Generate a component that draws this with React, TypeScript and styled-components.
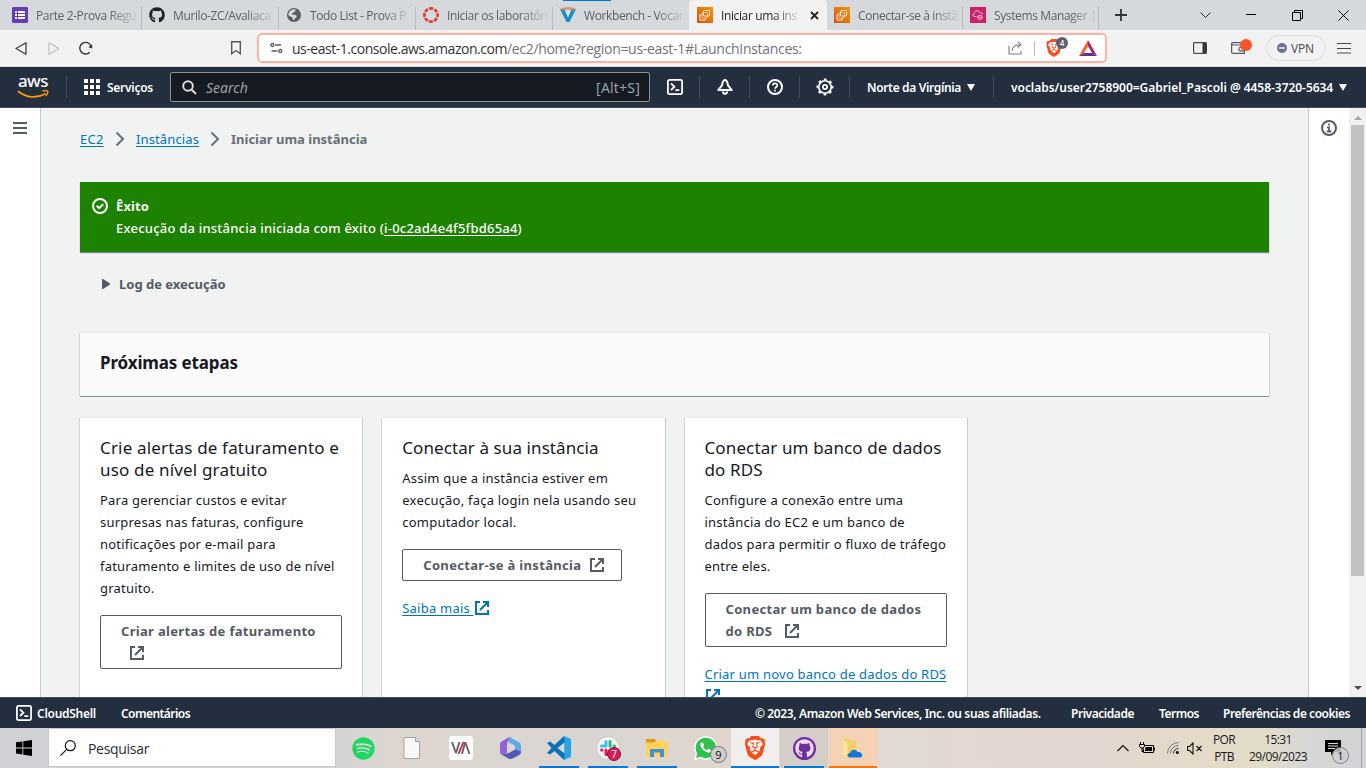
import React from 'react';
import styled, { createGlobalStyle, css } from 'styled-components';
import { FaGithub, FaSpotify } from 'react-icons/fa';
import { SiBrave } from 'react-icons/si';

const GlobalStyle = createGlobalStyle`
  * { box-sizing: border-box; }
  html, body { margin: 0; padding: 0; overflow: hidden; }
  svg { display: block; flex: none; }
`;

const ember = '"Noto Sans", "Open Sans", sans-serif';
const segoe = '"Open Sans", "Noto Sans", sans-serif';

const Screen = styled.div`
  width: 1366px;
  height: 768px;
  display: flex;
  flex-direction: column;
  overflow: hidden;
  background: #f1f3f3;
  font-family: ${ember};
  font-size: 13px;
  color: #16191f;
`;

/* ---------- tab strip ---------- */
const TabStrip = styled.div`
  height: 30px;
  flex: none;
  display: flex;
  padding-left: 5px;
  background: #d5d9dc;
`;

const Tab = styled.div<{ $width: number; $active?: boolean; $divided?: boolean; $lead?: number }>`
  position: relative;
  width: ${(p) => p.$width}px;
  flex: none;
  display: flex;
  align-items: center;
  gap: 8px;
  padding-left: ${(p) => p.$lead ?? 7}px;
  font-family: ${segoe};
  font-size: 12px;
  letter-spacing: -0.38px;
  color: #5c6167;
  ${(p) =>
    p.$active &&
    css`
      background: #f2f2f2;
      color: #1f2329;
      border-radius: 4px 4px 0 0;
    `}
  &::after {
    content: '';
    display: ${(p) => (p.$divided ? 'block' : 'none')};
    position: absolute;
    right: 0;
    top: 7px;
    bottom: 0;
    width: 1px;
    background: #b9bdc0;
  }
`;

const LoadingLine = styled.div`
  position: absolute;
  left: 10px;
  top: 0;
  width: 48px;
  height: 1px;
  background: #0078d4;
`;

const TabTitle = styled.span<{ $width: number }>`
  width: ${(p) => p.$width}px;
  white-space: nowrap;
  -webkit-mask-image: linear-gradient(90deg, #000 calc(100% - 30px), transparent);
`;

const WindowControls = styled.div`
  display: flex;
  align-items: center;
  margin-left: 16px;
  color: #111;
`;

const Control = styled.div<{ $left?: number }>`
  width: 12px;
  margin-left: ${(p) => p.$left ?? 0}px;
  display: flex;
  justify-content: center;
`;

/* ---------- address bar ---------- */
const Toolbar = styled.div`
  height: 37px;
  flex: none;
  display: flex;
  align-items: center;
  padding-left: 15px;
  background: #f2f2f2;
  border-bottom: 1px solid #d9dcdd;
  font-family: ${segoe};
`;

const ToolIcon = styled.div<{ $left?: number }>`
  position: relative;
  margin-left: ${(p) => p.$left ?? 0}px;
`;

const AddressBox = styled.div`
  width: 850px;
  height: 30px;
  flex: none;
  margin-left: 16px;
  padding: 0 8px 0 11px;
  display: flex;
  align-items: center;
  background: #fff;
  border: 2px solid #ffb1a2;
  border-radius: 5px;
`;

const Host = styled.span`
  margin-left: 9px;
  font-size: 14px;
  letter-spacing: -0.47px;
  color: #2f3338;
`;

const Path = styled.span`
  flex: 1;
  font-size: 14px;
  letter-spacing: -0.31px;
  color: #6f747b;
`;

const Divider = styled.div`
  width: 1px;
  height: 15px;
  margin: 0 10px 0 12px;
  background: #b9bcc0;
`;

const ShieldCount = styled.div`
  position: absolute;
  left: 11px;
  top: -2px;
  width: 12px;
  height: 12px;
  border-radius: 50%;
  background: #5b6070;
  color: #fff;
  font-size: 8px;
  font-weight: 600;
  line-height: 12px;
  text-align: center;
`;

const WalletDot = styled.div`
  position: absolute;
  left: 9px;
  top: -3px;
  width: 12px;
  height: 12px;
  border-radius: 50%;
  background: #fb542b;
`;

const VpnPill = styled.div`
  width: 60px;
  height: 26px;
  margin: 0 11px 0 21px;
  padding-left: 10px;
  display: flex;
  align-items: center;
  gap: 4px;
  border: 1px solid #dcdde0;
  border-radius: 13px;
  font-size: 12px;
  letter-spacing: -0.14px;
  color: #45494f;
`;

/* ---------- AWS navigation ---------- */
const NavBar = styled.div`
  height: 41px;
  flex: none;
  display: flex;
  align-items: center;
  background: #232f3e;
  border-bottom: 1px solid #414d5c;
  color: #fff;
  font-size: 12px;
  font-weight: 600;
  white-space: nowrap;
`;

const Logo = styled.div`
  width: 32px;
  height: 24px;
  margin-left: 17px;
  display: flex;
  flex-direction: column;
  align-items: center;
`;

const LogoWord = styled.span`
  height: 15px;
  font-size: 17px;
  line-height: 11px;
  font-weight: 500;
  letter-spacing: -0.5px;
`;

const NavRule = styled.div<{ $left?: number }>`
  width: 1px;
  height: 22px;
  flex: none;
  margin-left: ${(p) => p.$left ?? 0}px;
  background: #414d5c;
`;

const AppGrid = styled.div`
  display: grid;
  grid-template-columns: repeat(3, 4px);
  grid-auto-rows: 4px;
  gap: 2px;
  margin: 0 7px 0 17px;
`;

const AppDot = styled.i`
  background: #fff;
`;

const Services = styled.span`
  width: 63px;
  letter-spacing: -0.27px;
`;

const SearchBox = styled.div`
  width: 480px;
  height: 30px;
  flex: none;
  display: flex;
  align-items: center;
  padding: 0 9px 0 11px;
  background: #161a22;
  border: 1px solid #879596;
  border-radius: 2px;
  color: #95a5a6;
  font-weight: 400;
`;

const Placeholder = styled.span`
  flex: 1;
  margin-left: 9px;
  font-size: 14px;
  font-style: italic;
`;

const Shortcut = styled.span`
  font-size: 14px;
  letter-spacing: 0.2px;
`;

const NavIcon = styled.div`
  width: 49px;
  display: flex;
  justify-content: center;
`;

const Region = styled.span`
  width: 94px;
  margin-left: 17px;
  letter-spacing: -0.34px;
`;

const Account = styled.span`
  width: 322px;
  margin-left: 17px;
  letter-spacing: -0.04px;
`;

const Caret = styled.i<{ $left: number }>`
  width: 0;
  height: 0;
  margin-left: ${(p) => p.$left}px;
  border: 4px solid transparent;
  border-top: 7px solid #fff;
  border-bottom: 0;
`;

/* ---------- page ---------- */
const Body = styled.div`
  height: 589px;
  flex: none;
  display: flex;
  overflow: hidden;
`;

const SideRail = styled.div<{ $right?: boolean }>`
  width: 41px;
  flex: none;
  background: #fff;
  ${(p) =>
    p.$right
      ? css`
          border-left: 1px solid #c5cbcc;
          padding: 12px 0 0 12px;
        `
      : css`
          border-right: 1px solid #c5cbcc;
          padding: 14px 0 0 13px;
        `}
`;

const Burger = styled.div`
  width: 14px;
  height: 12px;
  border: solid #545b64;
  border-width: 2px 0;
  padding-top: 3px;
  &::before {
    content: '';
    display: block;
    height: 2px;
    background: #545b64;
  }
`;

const Main = styled.main`
  width: 1267px;
  flex: none;
  padding: 20px 39px 0;
  overflow: hidden;
`;

const Breadcrumbs = styled.nav`
  height: 22px;
  display: flex;
  align-items: center;
`;

const Crumb = styled.a<{ $spacing: number; $width: number }>`
  width: ${(p) => p.$width}px;
  letter-spacing: ${(p) => p.$spacing}px;
  color: #0073bb;
  text-decoration: underline;
  text-underline-offset: 2px;
  white-space: nowrap;
`;

const CurrentCrumb = styled.span`
  color: #687078;
  font-weight: 700;
`;

const CrumbArrow = styled.svg`
  width: 10px;
  height: 16px;
  margin: 0 11px;
`;

const Flash = styled.section`
  height: 70px;
  margin-top: 32px;
  padding: 13px 12px;
  display: flex;
  gap: 8px;
  background: #1d8102;
  color: #fff;
  line-height: 22px;
  box-shadow: 0 1px 1px 0 rgba(0, 28, 36, 0.5);
`;

const FlashTitle = styled.div`
  font-weight: 700;
  letter-spacing: 0.1px;
`;

const FlashText = styled.div`
  font-weight: 500;
  letter-spacing: 0.22px;
  a {
    text-decoration: underline;
    text-underline-offset: 2px;
  }
`;

const FlashIcon = styled.div`
  padding-top: 3px;
`;

const LogToggle = styled.div`
  height: 22px;
  margin: 21px 0 0 22px;
  display: flex;
  align-items: center;
  gap: 9px;
  color: #545b64;
  font-weight: 700;
`;

const StepsHeader = styled.header`
  height: 63px;
  margin-top: 38px;
  padding: 19px 20px;
  background: #fafafa;
  box-shadow: 0 1px 0 #879196, -1px 0 0 #d0d6d6, 1px 0 0 #d0d6d6, 0 -1px 0 #e8ebeb;
  font-size: 17px;
  font-weight: 700;
  line-height: 22px;
  letter-spacing: -0.13px;
`;

const Cards = styled.div`
  display: grid;
  grid-template-columns: repeat(4, 1fr);
  gap: 20px;
  margin-top: 22px;
`;

const Card = styled.article`
  height: 330px;
  padding: 19px 20px;
  background: #fff;
  box-shadow: -1px 0 0 #d0d6d6, 1px 0 0 #c6cccc, 0 -1px 0 #e8ebeb;
  line-height: 22px;
  white-space: nowrap;
`;

const CardTitle = styled.h2<{ $spacing: number }>`
  margin: 0 0 8px;
  font-size: 17px;
  font-weight: 400;
  letter-spacing: ${(p) => p.$spacing}px;
`;

const CardText = styled.p`
  margin: 0 0 16px;
  letter-spacing: 0.22px;
`;

const ActionButton = styled.a<{ $width: number }>`
  display: block;
  width: ${(p) => p.$width}px;
  padding: 4px 20px;
  border: 1px solid #545b64;
  border-radius: 2px;
  color: #545b64;
  font-weight: 700;
  letter-spacing: 0.32px;
  svg {
    display: inline-block;
    vertical-align: -3px;
    margin-left: 8px;
  }
`;

const CardLink = styled.a`
  display: block;
  margin-top: 16px;
  color: #0073bb;
  letter-spacing: 0.22px;
  text-decoration: underline;
  text-underline-offset: 2px;
  svg {
    display: inline-block;
    vertical-align: -3px;
  }
`;

const ScrollBar = styled.div`
  width: 17px;
  flex: none;
  display: flex;
  flex-direction: column;
  align-items: center;
  background: #f1f1f1;
`;

const ScrollThumb = styled.div`
  width: 13px;
  height: 451px;
  margin: 5px 0 auto;
  background: #c1c1c1;
`;

const ScrollArrow = styled.i<{ $down?: boolean }>`
  width: 0;
  height: 0;
  border: 4px solid transparent;
  ${(p) =>
    p.$down
      ? css`
          border-top-color: #505050;
          border-bottom: 0;
          margin-bottom: 7px;
        `
      : css`
          border-bottom-color: #a3a3a3;
          border-top: 0;
          margin-top: 8px;
        `}
`;

/* ---------- footer ---------- */
const Footer = styled.footer`
  height: 31px;
  flex: none;
  display: flex;
  align-items: center;
  padding-left: 16px;
  background: #232f3e;
  border-top: 1px solid #414d5c;
  color: #fff;
  font-size: 12px;
  font-weight: 600;
  white-space: nowrap;
`;

const FooterItem = styled.span<{ $left: number; $width: number; $spacing: number }>`
  margin-left: ${(p) => p.$left}px;
  width: ${(p) => p.$width}px;
  letter-spacing: ${(p) => p.$spacing}px;
`;

/* ---------- taskbar ---------- */
const TaskBar = styled.div`
  height: 40px;
  flex: none;
  display: flex;
  align-items: center;
  font-family: ${segoe};
  color: #1a1a1a;
  background: linear-gradient(90deg, #cfd1d4 0, #d3d3d4 330px, #ddd6cf 400px, #d9d5d2 600px, #dfd7cd 730px, #e2d9d2 900px, #e4d6d1 1090px, #e4dac9 1200px, #e3dcc9 1260px, #d6d6d5 1310px, #d0d2d5 1366px);
`;

const StartButton = styled.div`
  width: 48px;
  padding-left: 16px;
`;

const TaskSearch = styled.div`
  width: 288px;
  height: 39px;
  align-self: flex-start;
  flex: none;
  display: flex;
  align-items: center;
  gap: 12px;
  padding: 1px 0 0 11px;
  background: #fff;
  border: 1px solid #c8c8c8;
  font-size: 14px;
  letter-spacing: -0.3px;
  color: #2c2c2c;
`;

const TaskApps = styled.div`
  display: flex;
  height: 40px;
  margin-left: 3px;
`;

const TaskApp = styled.div<{ $line?: 'short' | 'full'; $tint?: string; $accent?: string }>`
  position: relative;
  width: 48px;
  margin-right: 1px;
  display: flex;
  align-items: center;
  justify-content: center;
  background: ${(p) => p.$tint ?? 'transparent'};
  &::after {
    content: '';
    display: ${(p) => (p.$line ? 'block' : 'none')};
    position: absolute;
    bottom: 0;
    left: ${(p) => (p.$line === 'full' ? 0 : 4)}px;
    right: ${(p) => (p.$line === 'full' ? 0 : 4)}px;
    height: 2px;
    background: ${(p) => p.$accent ?? '#0a78d4'};
  }
`;

const Count = styled.div<{ $kind: 'slack' | 'grey' | 'note' }>`
  position: absolute;
  border-radius: 50%;
  text-align: center;
  ${(p) =>
    p.$kind === 'slack' &&
    css`
      left: 23px;
      top: 19px;
      width: 14px;
      height: 14px;
      font-size: 10px;
      line-height: 12px;
      background: #d81b56;
      border: 1px solid #7e1237;
      color: #fff;
    `}
  ${(p) =>
    p.$kind === 'grey' &&
    css`
      left: 28px;
      top: 18px;
      width: 17px;
      height: 17px;
      font-size: 11px;
      line-height: 15px;
      background: #cfcfcd;
      border: 1px solid #777;
      color: #111;
    `}
  ${(p) =>
    p.$kind === 'note' &&
    css`
      left: 7px;
      top: 7px;
      width: 17px;
      height: 17px;
      font-size: 11px;
      line-height: 15px;
      background: rgba(205, 207, 209, 0.85);
      border: 1px solid #808080;
      color: #111;
    `}
`;

const ViaTile = styled.div`
  width: 24px;
  height: 24px;
  border-radius: 3px;
  background: #fff;
  display: flex;
  align-items: center;
  justify-content: center;
`;

const WhiteDisc = styled.div`
  width: 24px;
  height: 24px;
  border-radius: 50%;
  background: #f6f4f2;
  border: 1px solid #c9c9c9;
  display: flex;
  align-items: center;
  justify-content: center;
`;

const GitHubDisc = styled.div`
  width: 23px;
  height: 23px;
  border-radius: 50%;
  border: 2px solid #6e2d9c;
  background: #6e2d9c;
  color: #ecdcf5;
`;

const Tray = styled.div`
  height: 40px;
  margin-left: auto;
  display: flex;
  align-items: center;
  font-size: 12px;
  line-height: 17px;
`;

const TrayIcon = styled.div<{ $width: number }>`
  width: ${(p) => p.$width}px;
`;

const TrayText = styled.div<{ $width: number; $spacing: number }>`
  width: ${(p) => p.$width}px;
  text-align: center;
  letter-spacing: ${(p) => p.$spacing}px;
`;

const NoteIcon = styled.div`
  position: relative;
  width: 36px;
  margin-left: 8px;
`;

const DesktopEdge = styled.div`
  width: 5px;
  height: 40px;
  border-left: 1px solid #9fa1a3;
`;

/* ---------- drawings ---------- */
const ExternalIcon = () => (
  <svg width="16" height="16" viewBox="0 0 16 16" fill="none" stroke="currentColor" strokeWidth="2">
    <path d="M6 2H2v12h12v-4" />
    <path d="M9 2h5v5M14 2L6 10" />
  </svg>
);

const ShellIcon = () => (
  <svg width="16" height="16" viewBox="0 0 16 16" fill="none" stroke="#fff" strokeWidth="1.8">
    <rect x="0.9" y="0.9" width="14.2" height="14.2" rx="1.5" />
    <path d="M4 4.5L7.4 7.7 4 11M8.3 11.2h4" />
  </svg>
);

const BellIcon = () => (
  <svg width="16" height="16" viewBox="0 0 16 16" fill="none" stroke="#fff" strokeWidth="2" strokeLinejoin="round">
    <path d="M8 0.8C5.6 1.8 5.3 3.5 5 6.3L1.3 11h13.4L11 6.3C10.7 3.5 10.4 1.8 8 .8z" />
    <path d="M6 12.5c0 3 4 3 4 0" />
  </svg>
);

const HelpIcon = () => (
  <svg width="16" height="16" viewBox="0 0 16 16" fill="none" stroke="#fff" strokeWidth="2">
    <circle cx="8" cy="8" r="7" />
    <path d="M5.8 6.6C5.8 3.7 10.3 3.8 10.3 6.4 10.3 8 8 7.900 8 9.700M8 10.800v1.600" strokeWidth="1.7" />
  </svg>
);

const GearIcon = () => (
  <svg width="18" height="18" viewBox="0 0 17 17" fill="none" stroke="#fff">
    <circle cx="8.5" cy="8.5" r="5.900" strokeWidth="1.600" />
    <circle cx="8.5" cy="8.5" r="7.200" strokeWidth="1.600" strokeDasharray="2.600 3.055" strokeDashoffset="1.300" />
    <circle cx="8.5" cy="8.5" r="2" strokeWidth="1.700" />
  </svg>
);

const InfoIcon = () => (
  <svg width="16" height="16" viewBox="0 0 16 16" fill="none" stroke="#545b64" strokeWidth="2">
    <circle cx="8" cy="8" r="7" />
    <path d="M8 3.500v2M6 7.300h2v4M5.800 11.500h4.600" strokeWidth="1.800" />
  </svg>
);

const FormsIcon = () => (
  <svg width="16" height="16" viewBox="0 0 16 16">
    <rect width="16" height="16" rx="1" fill="#673ab7" />
    <path d="M3 4h2v2H3zM3 7h2v2H3zM3 10h2v2H3zM6 4h7v2H6zM6 7h7v2H6zM6 10h7v2H6z" fill="#fff" />
  </svg>
);

const GlobeIcon = () => (
  <svg width="16" height="16" viewBox="0 0 16 16">
    <circle cx="8" cy="8" r="7" fill="#5a5e63" />
    <path d="M8 2.300c2.500.2 2.200 1.700.6 2.200-1.600.4-.7 1.600-2.200 1.800-1.200.2-.6 1.500 1 1.500 2 0 3.800.6 3.200 2-.6 1.400-2 1.500-2.600 3.600-1.800-.6-.9-2.600-2.400-3.400C4.300 9.400 2.500 9 2.200 7.500 3 4.500 5 2.300 8 2.300z" fill="#d5d9dc" />
  </svg>
);

const CanvasIcon = () => (
  <svg width="16" height="16" viewBox="0 0 16 16" fill="none" stroke="#e4362d">
    <circle cx="8" cy="8" r="6.600" strokeWidth="2.600" strokeDasharray="3.900 1.284" strokeDashoffset="1.950" />
  </svg>
);

const VocareumIcon = () => (
  <svg width="16" height="16" viewBox="0 0 16 16">
    <path d="M0 2l5 0 3 8 3-8h5L9.500 15h-3z" fill="#1b8fc4" />
    <path d="M1 1.500c4-1.600 10-1.600 14 0l-1 2c-4-1.400-8-1.400-12 0z" fill="#e58a62" />
    <path d="M5 3.500h6L8 10z" fill="#d9eef7" />
  </svg>
);

const Ec2Icon = () => (
  <svg width="16" height="16" viewBox="0 0 16 16">
    <defs>
      <linearGradient id="ec2" x1="0" y1="1" x2="1" y2="0">
        <stop offset="0" stopColor="#cf5a12" />
        <stop offset="1" stopColor="#f7940a" />
      </linearGradient>
    </defs>
    <rect width="16" height="16" fill="url(#ec2)" />
    <g fill="none" stroke="#fff0dc">
      <rect x="6.500" y="3.500" width="6" height="5.500" rx="1" />
      <rect x="5" y="5.500" width="5.500" height="5.500" rx="1" opacity=".6" />
      <path d="M5 7.500H3v5.500h5.500v-2" />
    </g>
  </svg>
);

const SystemsIcon = () => (
  <svg width="16" height="16" viewBox="0 0 16 16">
    <rect width="16" height="16" fill="#cf1f68" />
    <g fill="none" stroke="#ffd7e6">
      <path d="M6.500 9.500H4.500C2.500 9.500 2.500 6.500 4.500 6.500 4.500 3 9 3 9.800 5.500c1.500 0 2.500.8 2.700 2" />
      <circle cx="10" cy="10.300" r="2.200" />
      <circle cx="10" cy="10.300" r=".5" />
    </g>
  </svg>
);

const WindowsIcon = () => (
  <svg width="16" height="16" viewBox="0 0 16 16" fill="#000">
    <path d="M0 2.300l6.500-.9v6.100H0zM7.300 1.300L16 0v7.500H7.300zM0 8.400h6.500v6.100L0 13.600zM7.300 8.400H16V16l-8.700-1.300z" />
  </svg>
);

const SearchGlyph = () => (
  <svg width="16" height="16" viewBox="0 0 16 16" fill="none" stroke="#111" strokeWidth="1.200">
    <circle cx="10.300" cy="5.700" r="5" />
    <path d="M6.700 9.300L.4 15.600" />
  </svg>
);

const VsCodeIcon = () => (
  <svg width="24" height="24" viewBox="0 0 24 24">
    <path d="M17 0l-9.500 9L3 5.600 0 7l4.500 5L0 17l3 1.400L7.500 15l9.500 9 1-1V1z" fill="#0a72b8" />
    <path d="M17 0l7 3v18l-7 3 .800-6.500v-11z" fill="#27a3ea" />
    <path d="M17.500 6.500L10.500 12l7 5.500z" fill="#dbd6d0" />
  </svg>
);

const ExplorerIcon = () => (
  <svg width="22" height="18" viewBox="0 0 22 18">
    <path d="M0 0h9l1.500 2H21v4H0z" fill="#dd9a14" />
    <path d="M0 3.500h8L10 2h11.500v16H0z" fill="#ffd25a" />
    <path d="M4 18v-8h14v8h-4v-4.500H8V18z" fill="#3f93d8" />
  </svg>
);

const M365Icon = () => (
  <svg width="21" height="22" viewBox="0 0 21 22">
    <path d="M9.500 0L2 4.200C.7 5 0 5.900 0 7.300V15c0 2.400 2 3.300 3.700 2.400L7 15.500V8c0-3.200 1.500-5 5-6.500z" fill="#8f62da" />
    <path d="M9.500 0l9 5C20.300 6 21 7 21 9v6.500L15 13V8.500L9.500 5.700C8 4.500 8 1.500 9.500 0z" fill="#5fa9e8" />
    <path d="M1.500 17.500L9 16l6-3.500 6 2c0 1.800-.6 2.700-1.800 3.400L12.500 21.500c-1.300.7-2.700.7-4 0z" fill="#5257b8" />
  </svg>
);

const DocIcon = () => (
  <svg width="18" height="22" viewBox="0 0 18 22">
    <path d="M1 .5h11.500L16.500 4.500v17H1z" fill="#f8f8f6" stroke="#a5a39f" />
    <path d="M12.500.5v4h4" fill="#ddd" stroke="#a5a39f" />
  </svg>
);

const ViaMark = () => (
  <svg width="20" height="12" viewBox="0 0 20 12" fill="none" strokeWidth="1.900">
    <path d="M1 0l4 11M5 11L8.500 0M14.200 0l4.300 12M14.200 0L11 12" stroke="#666" />
    <path d="M12.500 0L7.500 12" stroke="#c8304a" />
  </svg>
);

const OneDriveFolder = () => (
  <svg width="20" height="19" viewBox="0 0 20 19">
    <path d="M0 1.500L1.500 0H6l2 1.500h5V17L2 18 0 16.500z" fill="#f6cf69" />
    <path d="M0 1.500l4.500 2.500v14.500L0 16.500z" fill="#fde59b" />
    <path d="M7 18.500c-3.500 0-3.500-4.500 0-4.500 1-4.500 6.500-4 7.500-1 5-1 6.500 5.500 2.500 5.500z" fill="#1379d0" />
  </svg>
);

const ShieldIcon = ({ size }: { size: number }) => <SiBrave size={size} color="#fb4c18" />;

export default function App() {
  return (
    <Screen>
      <GlobalStyle />
      <TabStrip>
        <Tab $width={137} $divided><FormsIcon /><TabTitle $width={103}>Parte 2-Prova Regu</TabTitle></Tab>
        <Tab $width={137} $divided><FaGithub size={16} color="#20242a" /><TabTitle $width={103}>Murilo-ZC/Avaliaca</TabTitle></Tab>
        <Tab $width={137} $divided><GlobeIcon /><TabTitle $width={103}>Todo List - Prova P</TabTitle></Tab>
        <Tab $width={137} $divided><CanvasIcon /><TabTitle $width={103}>Iniciar os laboratóri</TabTitle></Tab>
        <Tab $width={136}><LoadingLine /><VocareumIcon /><TabTitle $width={103}>Workbench - Vocar</TabTitle></Tab>
        <Tab $width={138} $lead={8} $active>
          <Ec2Icon />
          <TabTitle $width={81}>Iniciar uma ins</TabTitle>
          <svg width="9" height="9" viewBox="0 0 9 9" stroke="#222" strokeWidth="1.800"><path d="M1 1l7 7M8 1L1 8" /></svg>
        </Tab>
        <Tab $width={136} $divided><Ec2Icon /><TabTitle $width={103}>Conectar-se à instâ</TabTitle></Tab>
        <Tab $width={136} $divided><SystemsIcon /><TabTitle $width={108}>Systems Manager |</TabTitle></Tab>
        <WindowControls>
          <Control><svg width="12" height="12" viewBox="0 0 12 12" stroke="#333" strokeWidth="1.800"><path d="M6 0v12M0 6h12" /></svg></Control>
          <Control $left={72}><svg width="11" height="7" viewBox="0 0 11 7" fill="none" stroke="#222"><path d="M.5.5l5 5 5-5" /></svg></Control>
          <Control $left={34}><svg width="10" height="10" viewBox="0 0 10 10" stroke="#000"><path d="M0 4.500h10" /></svg></Control>
          <Control $left={34}><svg width="11" height="11" viewBox="0 0 11 11" fill="none" stroke="#000"><path d="M.5 2.500h8v8h-8zM2.500 2.500v-2h8v8h-2" /></svg></Control>
          <Control $left={34}><svg width="11" height="11" viewBox="0 0 11 11" stroke="#000"><path d="M.5.5l10 10M10.500.5l-10 10" /></svg></Control>
        </WindowControls>
      </TabStrip>

      <Toolbar>
        <ToolIcon><svg width="12" height="13" viewBox="0 0 12 13" fill="none" stroke="#3b3f45" strokeWidth="1.300" strokeLinejoin="round"><path d="M11 .8v11.400L1 6.500z" /></svg></ToolIcon>
        <ToolIcon $left={21}><svg width="12" height="13" viewBox="0 0 12 13" fill="none" stroke="#c3c5c8" strokeWidth="1.300" strokeLinejoin="round"><path d="M1 .8v11.400l10-5.700z" /></svg></ToolIcon>
        <ToolIcon $left={19}>
          <svg width="14" height="14" viewBox="0 0 14 14" fill="none" stroke="#33373c" strokeWidth="1.400">
            <path d="M10.800 11.200A5.800 5.800 0 1 1 12 5" />
            <path d="M13.200 3.200v4.300L9.300 6.200z" fill="#33373c" stroke="none" />
          </svg>
        </ToolIcon>
        <ToolIcon $left={138}><svg width="10" height="14" viewBox="0 0 10 14" fill="none" stroke="#55595f" strokeWidth="1.400"><path d="M.7.700h8.600v12L5 9.500.7 12.700z" /></svg></ToolIcon>
        <AddressBox>
          <svg width="13" height="12" viewBox="0 0 13 12" fill="none" stroke="#5b5f65" strokeWidth="1.300">
            <circle cx="2.300" cy="3" r="1.500" /><path d="M5 3h6M1.500 9h6" /><circle cx="10.300" cy="9" r="1.500" />
          </svg>
          <Host>us-east-1.console.aws.amazon.com</Host>
          <Path>/ec2/home?region=us-east-1#LaunchInstances:</Path>
          <svg width="14" height="14" viewBox="0 0 14 14" fill="none" stroke="#777b80" strokeWidth="1.100">
            <path d="M1 5v8h12v-3M4 10c0-4 3-6.300 8.500-6.300M9.500.7l3.300 3-3.300 3" />
          </svg>
          <Divider />
          <ToolIcon>
            <ShieldIcon size={18} />
            <ShieldCount>4</ShieldCount>
          </ToolIcon>
          <ToolIcon $left={16}>
            <svg width="18" height="16" viewBox="0 0 18 16">
              <path d="M9 0L0 16l5-3 4-7z" fill="#ff5a2a" />
              <path d="M9 0l9 16-5-3-4-7z" fill="#a0246e" />
              <path d="M0 16l5-3h8l5 3z" fill="#662d91" />
            </svg>
          </ToolIcon>
        </AddressBox>
        <ToolIcon $left={86}>
          <svg width="14" height="12" viewBox="0 0 14 12" fill="none" stroke="#44484e" strokeWidth="1.200"><rect x=".6" y=".6" width="12.800" height="10.800" rx="1" /><path d="M9.500 1h4v10h-4z" fill="#33373c" stroke="none" /></svg>
        </ToolIcon>
        <ToolIcon $left={24}>
          <svg width="14" height="12" viewBox="0 0 14 12" fill="none" stroke="#55595f" strokeWidth="1.200"><path d="M.6 2.500V10c0 1 .4 1.400 1.400 1.400h11.400V3H2C1 3 .6 2.500.6 1.600S1 .6 2 .6h9.500V3M13.400 5.500H9c-1.500 0-1.500 3.400 0 3.400h4.400" /></svg>
          <WalletDot />
        </ToolIcon>
        <VpnPill>
          <svg width="10" height="10" viewBox="0 0 10 10"><circle cx="5" cy="5" r="5" fill="#6b7090" /><path d="M2 5h6" stroke="#fff" strokeWidth="1.300" /></svg>
          VPN
        </VpnPill>
        <svg width="14" height="12" viewBox="0 0 14 12" stroke="#44484e" strokeWidth="1.200"><path d="M0 1.500h14M0 6.500h14M0 11h14" /></svg>
      </Toolbar>

      <NavBar>
        <Logo>
          <LogoWord>aws</LogoWord>
          <svg width="32" height="9" viewBox="0 0 32 9" fill="none" stroke="#ff9900" strokeWidth="1.800" strokeLinecap="round">
            <path d="M1.500 1.500c8 6.500 18 7 26.500 2.500" />
            <path d="M26 .9c2.500-.4 4-.3 4.500.2s.1 2.400-1.200 4.200" strokeWidth="1.400" />
          </svg>
        </Logo>
        <NavRule $left={17} />
        <AppGrid>{Array.from({ length: 9 }, (_, i) => <AppDot key={i} />)}</AppGrid>
        <Services>Serviços</Services>
        <SearchBox>
          <svg width="15" height="15" viewBox="0 0 15 15" fill="none" stroke="#d5dbdb" strokeWidth="2"><circle cx="6" cy="6" r="4.800" /><path d="M9.500 9.500l4.500 4.500" /></svg>
          <Placeholder>Search</Placeholder>
          <Shortcut>[Alt+S]</Shortcut>
        </SearchBox>
        <NavIcon><ShellIcon /></NavIcon>
        <NavRule />
        <NavIcon><BellIcon /></NavIcon>
        <NavRule />
        <NavIcon><HelpIcon /></NavIcon>
        <NavRule />
        <NavIcon><GearIcon /></NavIcon>
        <NavRule />
        <Region>Norte da Virgínia</Region>
        <Caret $left={6} />
        <NavRule $left={18} />
        <Account>voclabs/user2758900=Gabriel_Pascoli @ 4458-3720-5634</Account>
        <Caret $left={6} />
      </NavBar>

      <Body>
        <SideRail><Burger /></SideRail>
        <Main>
          <Breadcrumbs>
            <Crumb $width={24} $spacing={0.3}>EC2</Crumb>
            <CrumbArrow viewBox="0 0 10 16" fill="none" stroke="#687078" strokeWidth="2"><path d="M1.500 1.500L8 8l-6.500 6.500" /></CrumbArrow>
            <Crumb $width={63} $spacing={0.12}>Instâncias</Crumb>
            <CrumbArrow viewBox="0 0 10 16" fill="none" stroke="#687078" strokeWidth="2"><path d="M1.500 1.500L8 8l-6.500 6.500" /></CrumbArrow>
            <CurrentCrumb>Iniciar uma instância</CurrentCrumb>
          </Breadcrumbs>
          <Flash>
            <FlashIcon>
              <svg width="16" height="16" viewBox="0 0 16 16" fill="none" stroke="#fff" strokeWidth="2"><circle cx="8" cy="8" r="7" /><path d="M4.700 7.800l2.500 2.400 4-4" /></svg>
            </FlashIcon>
            <div>
              <FlashTitle>Êxito</FlashTitle>
              <FlashText>Execução da instância iniciada com êxito (<a>i-0c2ad4e4f5fbd65a4</a>)</FlashText>
            </div>
          </Flash>
          <LogToggle>
            <svg width="8" height="10" viewBox="0 0 8 10" fill="#545b64"><path d="M0 0l1 0 7 4.500v1L1 10H0z" /></svg>
            Log de execução
          </LogToggle>
          <StepsHeader>Próximas etapas</StepsHeader>
          <Cards>
            <Card>
              <CardTitle $spacing={0.17}>Crie alertas de faturamento e<br />uso de nível gratuito</CardTitle>
              <CardText>
                Para gerenciar custos e evitar<br />surpresas nas faturas, configure<br />notificações por e-mail para<br />
                faturamento e limites de uso de nível<br />gratuito.
              </CardText>
              <ActionButton $width={242}>Criar alertas de faturamento<br /><ExternalIcon /></ActionButton>
            </Card>
            <Card>
              <CardTitle $spacing={0.09}>Conectar à sua instância</CardTitle>
              <CardText>Assim que a instância estiver em<br />execução, faça login nela usando seu<br />computador local.</CardText>
              <ActionButton $width={220}>Conectar-se à instância<ExternalIcon /></ActionButton>
              <CardLink>Saiba mais <ExternalIcon /></CardLink>
            </Card>
            <Card>
              <CardTitle $spacing={0.12}>Conectar um banco de dados<br />do RDS</CardTitle>
              <CardText>Configure a conexão entre uma<br />instância do EC2 e um banco de<br />dados para permitir o fluxo de tráfego<br />entre eles.</CardText>
              <ActionButton $width={242}>Conectar um banco de dados<br />do RDS <ExternalIcon /></ActionButton>
              <CardLink>Criar um novo banco de dados do RDS<br /><ExternalIcon /></CardLink>
            </Card>
          </Cards>
        </Main>
        <SideRail $right><InfoIcon /></SideRail>
        <ScrollBar><ScrollArrow /><ScrollThumb /><ScrollArrow $down /></ScrollBar>
      </Body>

      <Footer>
        <ShellIcon />
        <FooterItem $left={5} $width={59} $spacing={-0.27}>CloudShell</FooterItem>
        <FooterItem $left={25} $width={69} $spacing={-0.55}>Comentários</FooterItem>
        <FooterItem $left={565} $width={286} $spacing={-0.38}>© 2023, Amazon Web Services, Inc. ou suas afiliadas.</FooterItem>
        <FooterItem $left={30} $width={63} $spacing={-0.46}>Privacidade</FooterItem>
        <FooterItem $left={25} $width={40} $spacing={-0.51}>Termos</FooterItem>
        <FooterItem $left={24} $width={127} $spacing={-0.47}>Preferências de cookies</FooterItem>
      </Footer>

      <TaskBar>
        <StartButton><WindowsIcon /></StartButton>
        <TaskSearch><SearchGlyph />Pesquisar</TaskSearch>
        <TaskApps>
          <TaskApp><FaSpotify size={23} color="#1ed760" /></TaskApp>
          <TaskApp><DocIcon /></TaskApp>
          <TaskApp><ViaTile><ViaMark /></ViaTile></TaskApp>
          <TaskApp><M365Icon /></TaskApp>
          <TaskApp $line="short"><VsCodeIcon /></TaskApp>
          <TaskApp $line="short">
            <WhiteDisc>
              <svg width="18" height="18" viewBox="0 0 18 18" strokeWidth="3" strokeLinecap="round">
                <path d="M7 2.500v4M2.500 7H7" stroke="#36c5f0" /><path d="M11 2.500V7M15.500 7H15" stroke="#2eb67d" />
                <path d="M2.500 11H3M7 11v4.500" stroke="#e01e5a" /><path d="M11 11h4.500M11 15v.5" stroke="#ecb22e" />
              </svg>
            </WhiteDisc>
            <Count $kind="slack">7</Count>
          </TaskApp>
          <TaskApp $line="short"><ExplorerIcon /></TaskApp>
          <TaskApp>
            <svg width="24" height="24" viewBox="0 0 24 24">
              <path d="M0 24l1.600-6A11.800 11.800 0 1 1 6.200 22.400z" fill="#fff" />
              <path d="M2 22l1.300-4.500A10.200 10.200 0 1 1 6.800 20.800z" fill="#33c04e" />
              <path d="M8 6.200c-3 1.300-1.300 5 1 7.300s6.500 4.500 8 2c.6-1.500 0-1.600-2.400-2.700-1-.2-1 1.500-2 1.200-1.500-.6-2.900-2-3.400-3.300 0-.7 1-.9.8-1.800C9 6.200 8.700 6 8 6.200z" fill="#fff" />
            </svg>
            <Count $kind="grey">9</Count>
          </TaskApp>
          <TaskApp $line="full" $tint="#f1efed"><ShieldIcon size={24} /></TaskApp>
          <TaskApp $line="short" $tint="rgba(190,188,190,.35)"><GitHubDisc><FaGithub size={19} /></GitHubDisc></TaskApp>
          <TaskApp $line="full" $tint="#f6d2b4" $accent="#f7760b"><OneDriveFolder /></TaskApp>
        </TaskApps>
        <Tray>
          <TrayIcon $width={22}><svg width="12" height="8" viewBox="0 0 12 8" fill="none" stroke="#111" strokeWidth="1.200"><path d="M.5 7L6 1.500 11.500 7" /></svg></TrayIcon>
          <TrayIcon $width={28}>
            <svg width="16" height="13" viewBox="0 0 16 13" fill="none" stroke="#000"><path d="M5 3.500h9.500v7h-10v-4M15.500 5.500v3" /><path d="M6.500 5h6.500v4H6z" fill="#000" stroke="none" /><path d="M1.500 0v2M4.500 0v2M.5 2.500h5v2L4 6H2L.5 4.500zM3 6v3.500h1.500" /></svg>
          </TrayIcon>
          <TrayIcon $width={20}>
            <svg width="12" height="12" viewBox="0 0 12 12" fill="none" stroke="#777"><path d="M.5 11.500a11 11 0 0 1 11-11M3.500 11.500a8 8 0 0 1 8-8" /><path d="M6.500 11.500a5 5 0 0 1 5-5" stroke="#333" /><circle cx="10.300" cy="10.500" r="1.500" fill="#000" stroke="none" /></svg>
          </TrayIcon>
          <TrayIcon $width={22}>
            <svg width="15" height="13" viewBox="0 0 15 13" fill="none" stroke="#111" strokeWidth="1.100"><path d="M.6 4.500h2L6 1v11L2.600 8.500h-2zM9.500 4l5 5M14.500 4l-5 5" /></svg>
          </TrayIcon>
          <TrayText $width={30} $spacing={-0.66}>POR<br />PTB</TrayText>
          <TrayText $width={78} $spacing={-0.58}>15:31<br />29/09/2023</TrayText>
          <NoteIcon>
            <svg width="16" height="16" viewBox="0 0 16 16"><path d="M0 0h16v12H9l-3 3.500V12H0z" fill="#000" /><path d="M3 3.500h10M3 6h10M3 8.500h7" stroke="#ddd" /></svg>
            <Count $kind="note">1</Count>
          </NoteIcon>
          <DesktopEdge />
        </Tray>
      </TaskBar>
    </Screen>
  );
}
